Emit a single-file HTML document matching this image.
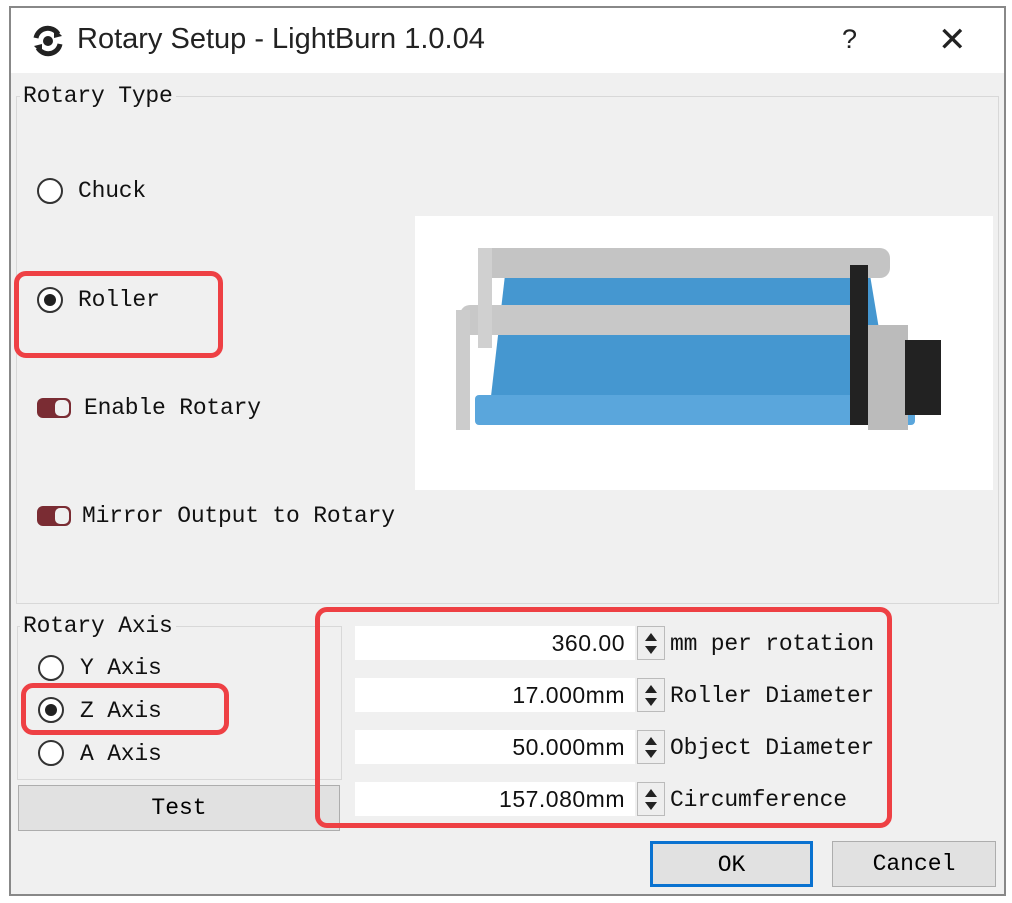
<!DOCTYPE html>
<html><head><meta charset="utf-8"><style>
body{margin:0;width:1012px;height:903px;background:#fff;position:relative;overflow:hidden;font-family:"Liberation Mono",monospace;}
.a{position:absolute}
.t{font-size:23px;color:#111;white-space:pre;line-height:1;letter-spacing:-0.2px}
.radio{position:absolute;width:26px;height:26px;border-radius:50%;border:2px solid #333;background:#fff;box-sizing:border-box}
.radio.on::after{content:"";position:absolute;left:5px;top:5px;width:12px;height:12px;border-radius:50%;background:#222}
.tog{position:absolute;width:34px;height:20px;border-radius:6px;background:#7a2c33}
.tog::after{content:"";position:absolute;right:2px;top:2px;width:14px;height:16px;border-radius:5px;background:#f0f0f0}
.red{position:absolute;border:5px solid #ee4044;border-radius:12px;box-sizing:border-box}
.inp{position:absolute;left:355px;width:280px;height:34px;background:#fff;text-align:right;font-size:23px;font-family:"Liberation Sans",sans-serif;line-height:34px;padding-right:10px;box-sizing:border-box;color:#111;letter-spacing:0.5px}
.sp{position:absolute;left:637px;width:28px;height:34px;border:1px solid #bbb;background:#eee;box-sizing:border-box}
.sp::before{content:"";position:absolute;left:7px;top:6px;border:6px solid transparent;border-bottom:8px solid #222;border-top:0}
.sp::after{content:"";position:absolute;left:7px;top:19px;border:6px solid transparent;border-top:8px solid #222;border-bottom:0}
.btn{position:absolute;background:#e1e1e1;border:1px solid #adadad;box-sizing:border-box;text-align:center;font-size:23px}
</style></head><body>
<div class="a" style="left:9px;top:6px;width:997px;height:890px;border:2px solid #888;box-sizing:border-box;background:#f0f0f0"></div>
<div class="a" style="left:11px;top:8px;width:993px;height:65px;background:#fff"></div>
<svg class="a" style="left:30px;top:24px" width="36" height="34" viewBox="0 0 36 34">
<path d="M6 14 A12 12 0 0 1 28 10" fill="none" stroke="#222" stroke-width="5"/>
<path d="M30 20 A12 12 0 0 1 8 24" fill="none" stroke="#222" stroke-width="5"/>
<polygon points="24,4 32,12 24,14" fill="#222"/><polygon points="12,30 4,22 12,20" fill="#222"/>
<circle cx="18" cy="17" r="5" fill="#222"/></svg>
<div class="a" style="left:77px;top:23px;font-family:'Liberation Sans',sans-serif;font-size:29px;color:#222">Rotary Setup - LightBurn 1.0.04</div>
<div class="a" style="left:842px;top:24px;font-family:'Liberation Sans',sans-serif;font-size:27px;color:#222">?</div>
<div class="a" style="left:938px;top:20px;font-family:'Liberation Sans',sans-serif;font-size:34px;color:#222">✕</div>

<div class="a" style="left:16px;top:96px;width:983px;height:508px;border:1px solid #d8d8d8;box-sizing:border-box"></div>
<div class="a t" style="left:20px;top:85px;background:#f0f0f0;padding:0 3px">Rotary Type</div>
<div class="a" style="left:415px;top:216px;width:578px;height:274px;background:#fff"></div>
<svg class="a" style="left:450px;top:245px" width="520" height="195" viewBox="0 0 520 195">
<polygon points="55,30 420,30 440,150 40,160" fill="#4597d0"/>
<rect x="25" y="150" width="440" height="30" rx="4" fill="#5aa6dc"/>
<rect x="30" y="3" width="410" height="30" rx="10" fill="#c4c4c4"/>
<rect x="10" y="60" width="400" height="30" rx="10" fill="#c8c8c8"/>
<rect x="28" y="3" width="14" height="100" fill="#d0d0d0"/>
<rect x="6" y="65" width="14" height="120" fill="#ccc"/>
<rect x="400" y="20" width="18" height="160" fill="#222"/>
<rect x="418" y="80" width="40" height="105" fill="#bbb"/>
<rect x="455" y="95" width="36" height="75" fill="#222"/>
</svg>

<div class="radio" style="left:37px;top:178px"></div><div class="a t" style="left:78px;top:180px">Chuck</div>
<div class="radio on" style="left:37px;top:287px"></div><div class="a t" style="left:78px;top:289px">Roller</div>
<div class="red" style="left:14px;top:271px;width:209px;height:87px"></div>
<div class="tog" style="left:37px;top:398px"></div><div class="a t" style="left:84px;top:397px">Enable Rotary</div>
<div class="tog" style="left:37px;top:506px"></div><div class="a t" style="left:82px;top:505px">Mirror Output to Rotary</div>

<div class="a" style="left:17px;top:626px;width:325px;height:154px;border:1px solid #d8d8d8;box-sizing:border-box"></div>
<div class="a t" style="left:20px;top:615px;background:#f0f0f0;padding:0 3px">Rotary Axis</div>
<div class="radio" style="left:38px;top:655px"></div><div class="a t" style="left:80px;top:657px">Y Axis</div>
<div class="radio on" style="left:38px;top:697px"></div><div class="a t" style="left:80px;top:700px">Z Axis</div>
<div class="radio" style="left:38px;top:740px"></div><div class="a t" style="left:80px;top:743px">A Axis</div>
<div class="red" style="left:21px;top:683px;width:208px;height:52px"></div>
<div class="btn" style="left:18px;top:785px;width:322px;height:46px;line-height:44px">Test</div>

<div class="inp" style="top:626px">360.00</div><div class="sp" style="top:626px"></div><div class="a t" style="left:670px;top:633px">mm per rotation</div>
<div class="inp" style="top:678px">17.000mm</div><div class="sp" style="top:678px"></div><div class="a t" style="left:670px;top:685px">Roller Diameter</div>
<div class="inp" style="top:730px">50.000mm</div><div class="sp" style="top:730px"></div><div class="a t" style="left:670px;top:737px">Object Diameter</div>
<div class="inp" style="top:782px">157.080mm</div><div class="sp" style="top:782px"></div><div class="a t" style="left:670px;top:789px">Circumference</div>
<div class="red" style="left:315px;top:607px;width:577px;height:221px"></div>

<div class="btn" style="left:650px;top:841px;width:163px;height:46px;line-height:42px;border:3px solid #0a72d0">OK</div>
<div class="btn" style="left:832px;top:841px;width:164px;height:46px;line-height:44px">Cancel</div>
</body></html>
